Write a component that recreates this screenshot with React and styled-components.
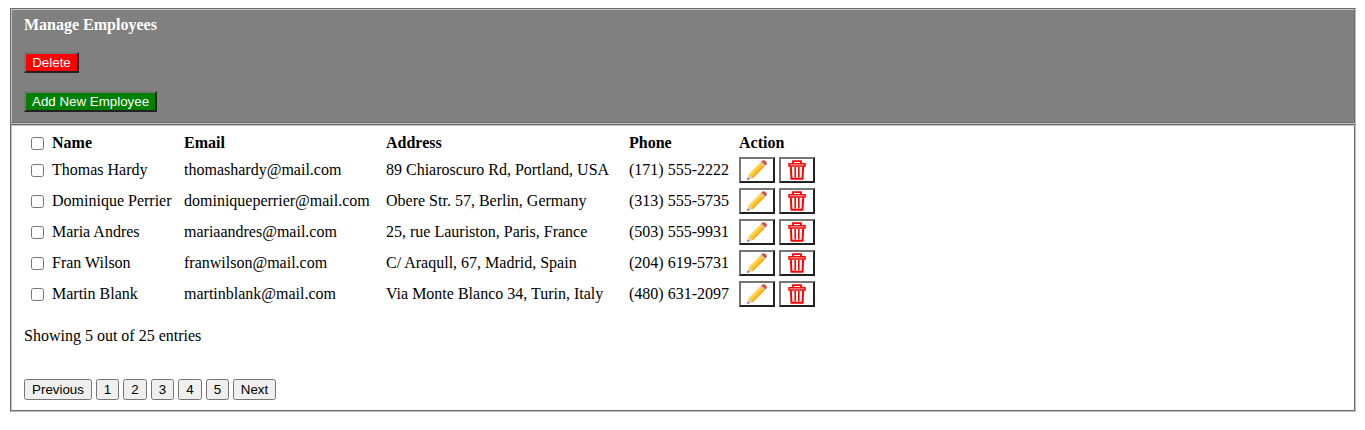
import React from "react";
import styled, { createGlobalStyle } from "styled-components";

const GlobalStyle = createGlobalStyle`
  body {
    margin: 8px;
    background: #fff;
    color: #000;
    font: 16px/18px "Liberation Serif", "Times New Roman", serif;
  }
`;

const Panel = styled.fieldset`
  box-sizing: border-box;
  margin: 0 1px 0 2px;
  min-width: 0;
  border: 2px groove rgb(192, 192, 192);
  height: ${(p) => p.$height}px;
  padding: ${(p) => p.$top}px 12px 0;
  background: ${(p) => p.$bg || "transparent"};
`;

const HeaderStack = styled.div`
  display: flex;
  flex-direction: column;
  align-items: flex-start;
  gap: 18px;
`;

const Title = styled.div`
  color: #fff;
  font-weight: bold;
`;

const Button = styled.button`
  box-sizing: border-box;
  height: 21px;
  margin: 0;
  padding: 1px 6px;
  font: 13.3333px "Liberation Sans", Arial, sans-serif;
  white-space: nowrap;
`;

const BevelButton = styled(Button)`
  border: 2px solid;
  border-color: #767676 #212121 #212121 #767676;
  border-radius: 0;
  background: ${(p) => p.$bg};
  color: #fff;
  width: ${(p) => p.$width}px;
`;

const IconButton = styled(BevelButton)`
  display: flex;
  align-items: center;
  justify-content: center;
  width: 36px;
  height: 26px;
  padding: 0;
  background: #fff;
`;

const PageButton = styled(Button)`
  width: ${(p) => p.$width}px;
  padding: 0;
  border: 1px solid #767676;
  border-radius: 2.5px;
  background: #efefef;
  color: #000;
`;

const Table = styled.table`
  table-layout: fixed;
  width: 792px;
  border-collapse: collapse;
  text-align: left;
  white-space: nowrap;

  th,
  td {
    padding: 0;
    vertical-align: top;
  }
`;

const HeadRow = styled.tr`
  height: 23px;
`;

const BodyRow = styled.tr`
  height: 31px;

  td {
    padding-top: 4px;
  }

  td:last-child {
    padding-top: 0;
  }
`;

const Checkbox = styled.input.attrs({ type: "checkbox" })`
  display: block;
  box-sizing: border-box;
  appearance: none;
  width: 13px;
  height: 13px;
  margin: 3px 0 0 7px;
  border: 1px solid #767676;
  border-radius: 2.5px;
  background: #fff;
`;

const Actions = styled.div`
  display: flex;
  gap: 4px;
`;

const Summary = styled.div`
  margin-top: 15px;
`;

const Pager = styled.div`
  display: flex;
  gap: 4px;
  margin-top: 34px;
`;

const Pencil = () => (
  <svg width="20" height="20" viewBox="0 0 20 20">
    <path d="M.2 19.8 1.7 14.2 5.8 18.3Z" fill="#edc9a0" />
    <path d="M.2 19.8.8 17.6 2.5 19.2Z" fill="#555" />
    <path d="M1.7 14.2 13.3 2.6 17.4 6.7 5.8 18.3Z" fill="#fbc52d" />
    <path d="M1.7 14.2 13.3 2.6 14.6 3.9 3 15.5Z" fill="#ffdc55" />
    <path d="M4.7 17.2 16.3 5.6 17.4 6.7 5.8 18.3Z" fill="#efad25" />
    <path d="M13.3 2.6 14.4 1.5 18.5 5.6 17.4 6.7Z" fill="#c8c0bd" />
    <path d="M14.4 1.5 15.4.6Q17-.4 18.7 1.3 20.4 3 19.4 4.6L18.5 5.6Z" fill="#d94b3b" />
  </svg>
);

const Trash = () => (
  <svg width="20" height="20" viewBox="0 0 20 20" fill="none" stroke="#f00" strokeWidth="2">
    <path d="M6 3.5V1.1H14V3.5" strokeWidth="1.8" />
    <path d="M2 3.8H18V5.9H2Z" strokeWidth="1.5" />
    <path d="M3.8 6.2 4.5 18.8H15.5L16.2 6.2" />
    <path d="M8.2 7V17.5M11.8 7V17.5" strokeWidth="1.6" />
  </svg>
);

const employees = [
  ["Thomas Hardy", "thomashardy@mail.com", "89 Chiaroscuro Rd, Portland, USA", "(171) 555-2222"],
  ["Dominique Perrier", "dominiqueperrier@mail.com", "Obere Str. 57, Berlin, Germany", "(313) 555-5735"],
  ["Maria Andres", "mariaandres@mail.com", "25, rue Lauriston, Paris, France", "(503) 555-9931"],
  ["Fran Wilson", "franwilson@mail.com", "C/ Araqull, 67, Madrid, Spain", "(204) 619-5731"],
  ["Martin Blank", "martinblank@mail.com", "Via Monte Blanco 34, Turin, Italy", "(480) 631-2097"],
];

const pages = [
  ["Previous", 68],
  ["1", 23],
  ["2", 24],
  ["3", 23],
  ["4", 24],
  ["5", 23],
  ["Next", 43],
];

export default function App() {
  return (
    <>
      <GlobalStyle />
      <Panel $height={116} $top={6} $bg="#808080">
        <HeaderStack>
          <Title>Manage Employees</Title>
          <BevelButton $bg="#f00" $width={55}>Delete</BevelButton>
          <BevelButton $bg="#008000" $width={133}>Add New Employee</BevelButton>
        </HeaderStack>
      </Panel>
      <Panel $height={288} $top={8}>
        <Table>
          <colgroup>
            <col width="28" />
            <col width="132" />
            <col width="202" />
            <col width="243" />
            <col width="110" />
            <col width="77" />
          </colgroup>
          <thead>
            <HeadRow>
              <th><Checkbox aria-label="Select all" /></th>
              <th>Name</th>
              <th>Email</th>
              <th>Address</th>
              <th>Phone</th>
              <th>Action</th>
            </HeadRow>
          </thead>
          <tbody>
            {employees.map((employee) => (
              <BodyRow key={employee[0]}>
                <td><Checkbox aria-label={employee[0]} /></td>
                {employee.map((value) => (
                  <td key={value}>{value}</td>
                ))}
                <td>
                  <Actions>
                    <IconButton aria-label="Edit"><Pencil /></IconButton>
                    <IconButton aria-label="Delete"><Trash /></IconButton>
                  </Actions>
                </td>
              </BodyRow>
            ))}
          </tbody>
        </Table>
        <Summary>Showing 5 out of 25 entries</Summary>
        <Pager>
          {pages.map(([label, width]) => (
            <PageButton key={label} $width={width}>{label}</PageButton>
          ))}
        </Pager>
      </Panel>
    </>
  );
}
